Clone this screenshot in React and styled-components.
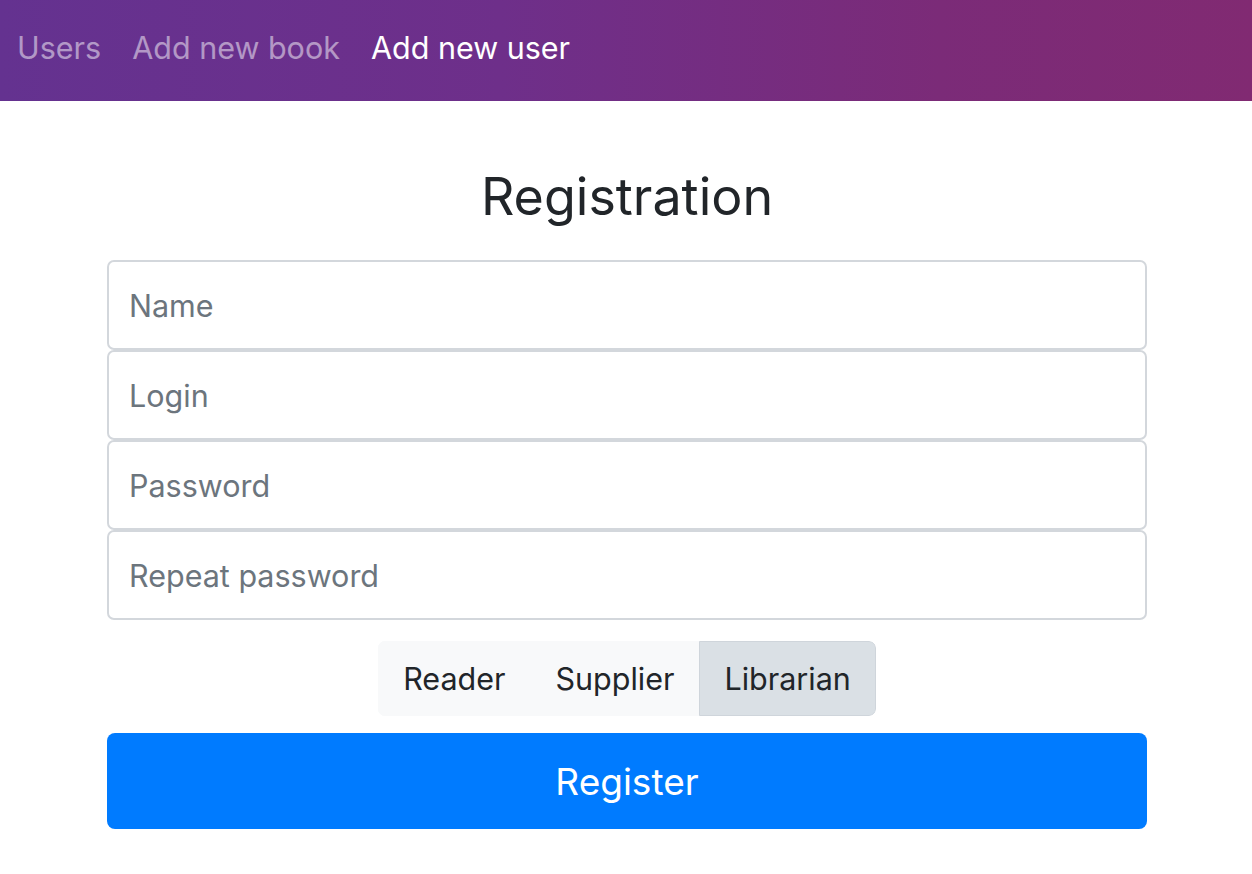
import { useState } from "react";
import styled, { createGlobalStyle } from "styled-components";

const GlobalStyle = createGlobalStyle`
    body {
        margin: 0;
        background: #ffffff;
        font-family: Inter, "Noto Sans", sans-serif;
        color: #212529;
    }
`

const NavBar = styled.nav`
    height: 101px;
    display: flex;
    align-items: center;
    gap: 31px;
    padding: 0 17px 6px;
    box-sizing: border-box;
    background: linear-gradient(90deg, #643290 0%, #6e2f8a 40%, #7b2b78 75%, #812a72 100%);
`

const NavLink = styled.a`
    font-size: 30.5px;
    color: ${({ $active }) => ($active ? "#ffffff" : "rgba(255, 255, 255, 0.5)")};
    text-decoration: none;
    cursor: pointer;
`

const Main = styled.main`
    width: 1040px;
    margin: 0 105px 0 107px;
    display: flex;
    flex-direction: column;
    align-items: center;
`

const Title = styled.h1`
    font-size: 52px;
    font-weight: 400;
    margin: 62px 0 29px;
    line-height: 68px;
`

const Fields = styled.div`
    width: 100%;
    display: flex;
    flex-direction: column;
`

const Input = styled.input`
    height: 90px;
    box-sizing: border-box;
    width: 100%;
    border: 2px solid #d3d7dc;
    border-radius: 7px;
    padding: 0 20px;
    font-family: inherit;
    font-size: 30.5px;
    color: #495057;
    outline: none;

    &::placeholder {
        color: #6c757d;
    }
`

const RoleGroup = styled.div`
    display: flex;
    margin-top: 21px;
    border-radius: 7px;
    overflow: hidden;
`

const RoleButton = styled.button`
    height: 75px;
    padding: 0 24px;
    font-family: inherit;
    font-size: 30.5px;
    color: #212529;
    border: ${({ $active }) => ($active ? "1px solid #cfd5db" : "1px solid #f8f9fa")};
    background: ${({ $active }) => ($active ? "#dae0e5" : "#f8f9fa")};
    cursor: pointer;

    &:last-child {
        border-radius: 0 7px 7px 0;
    }
`

const SubmitButton = styled.button`
    width: 100%;
    height: 96px;
    margin-top: 17px;
    border: none;
    border-radius: 8px;
    background: #007bff;
    color: #ffffff;
    font-family: inherit;
    font-size: 37px;
    cursor: pointer;
`

const roles = ["Reader", "Supplier", "Librarian"];

const App = () => {
    const [role, setRole] = useState("Librarian");

    return (
        <>
            <GlobalStyle />
            <NavBar>
                <NavLink>Users</NavLink>
                <NavLink>Add new book</NavLink>
                <NavLink $active>Add new user</NavLink>
            </NavBar>
            <Main>
                <Title>Registration</Title>
                <Fields>
                    <Input placeholder="Name" />
                    <Input placeholder="Login" />
                    <Input type="password" placeholder="Password" />
                    <Input type="password" placeholder="Repeat password" />
                </Fields>
                <RoleGroup>
                    {roles.map((r) => (
                        <RoleButton key={r} $active={role === r} onClick={() => setRole(r)}>
                            {r}
                        </RoleButton>
                    ))}
                </RoleGroup>
                <SubmitButton>Register</SubmitButton>
            </Main>
        </>
    )
}

export default App;
